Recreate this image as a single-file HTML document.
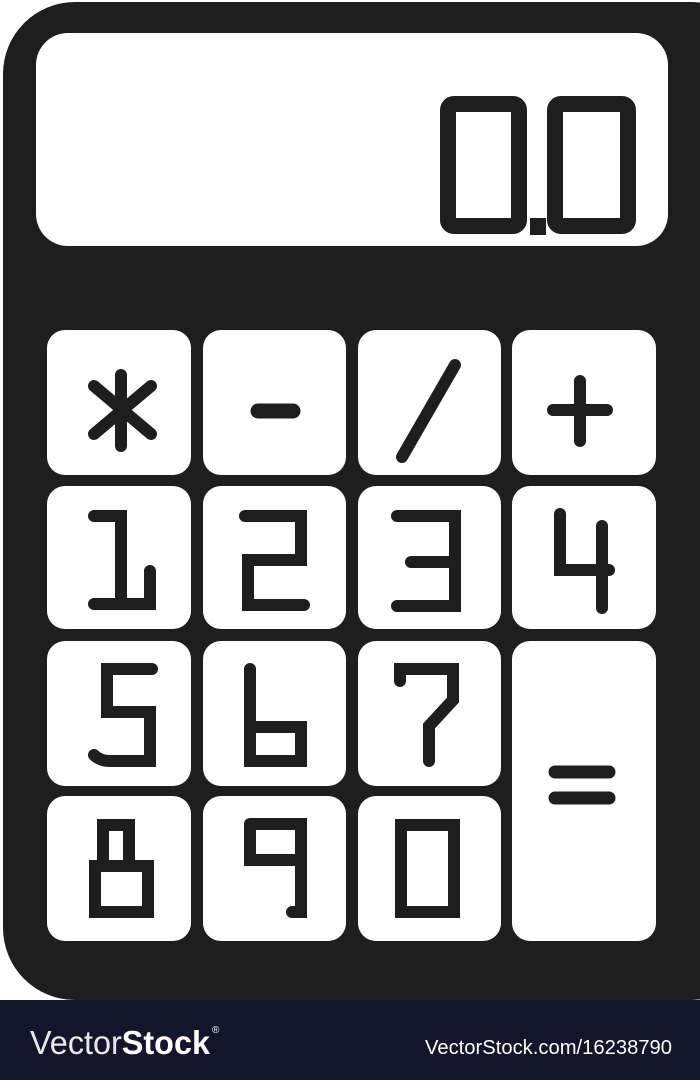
<!DOCTYPE html>
<html><head><meta charset="utf-8"><style>
html,body{margin:0;padding:0;width:700px;height:1080px;overflow:hidden;background:#fff;}
svg{display:block}
</style></head><body>
<svg width="700" height="1080" viewBox="0 0 700 1080" xmlns="http://www.w3.org/2000/svg">
<rect x="0" y="0" width="700" height="1000" fill="#fff"/>
<rect x="3" y="2" width="760" height="998" rx="72" fill="#1e1e1e"/>
<rect x="36" y="33" width="632" height="213" rx="32" fill="#fff"/>
<g fill="none" stroke="#1e1e1e" stroke-width="16" stroke-linejoin="round">
<rect x="448" y="104" width="71" height="122" rx="6"/>
<rect x="555" y="104" width="73" height="122" rx="6"/>
</g>
<rect x="530" y="218" width="16" height="17" fill="#1e1e1e"/>
<g fill="#fff">
<rect x="47" y="330" width="144" height="145" rx="18"/>
<rect x="203" y="330" width="143" height="145" rx="18"/>
<rect x="358" y="330" width="143" height="145" rx="18"/>
<rect x="512" y="330" width="144" height="145" rx="18"/>
<rect x="47" y="486" width="144" height="143" rx="18"/>
<rect x="203" y="486" width="143" height="143" rx="18"/>
<rect x="358" y="486" width="143" height="143" rx="18"/>
<rect x="512" y="486" width="144" height="143" rx="18"/>
<rect x="47" y="641" width="144" height="145" rx="18"/>
<rect x="203" y="641" width="143" height="145" rx="18"/>
<rect x="358" y="641" width="143" height="145" rx="18"/>
<rect x="512" y="641" width="144" height="300" rx="18"/>
<rect x="47" y="796" width="144" height="145" rx="18"/>
<rect x="203" y="796" width="143" height="145" rx="18"/>
<rect x="358" y="796" width="143" height="145" rx="18"/>
</g>
<g fill="none" stroke="#1e1e1e" stroke-width="12" stroke-linecap="round" stroke-linejoin="miter">
<path d="M121 375V446M94 386L151 434M94 434L151 386"/>
<path d="M258 411H293" stroke-width="15"/>
<path d="M455 365L402 457"/>
<path d="M553 410H607M580 381V441"/>
<path d="M94 516H121V604M94 604H150V571"/>
<path d="M245 516H301V560H248V605H304" stroke-linecap="butt"/>
<path d="M245 516H301M248 605H304"/>
<path d="M397 516H455V606H397M411 562H455"/>
<path d="M560 514V570H609M602 526V608"/>
<path d="M152 669H107V712H150V761H110Q100 761 94 755"/>
<path d="M250 669V761H301V727H250"/>
<path d="M400 681V669H453V700L429 726V761"/>
<path d="M555 772H609M555 798H609" stroke-width="13"/>
<path d="M103 825H129V866H103ZM95 866H148V912H95Z" stroke-linecap="butt"/>
<path d="M250 824H301V912H292M250 824V860H301" />
<path d="M401 825H454V912H401Z" stroke-linecap="butt"/>
</g>
<rect x="0" y="1000" width="700" height="80" fill="#13152a"/>
<text x="30" y="1054" font-family="Liberation Sans, sans-serif" font-size="33" fill="#fff" textLength="180" lengthAdjust="spacingAndGlyphs"><tspan font-weight="normal" fill="#e8e8ee">Vector</tspan><tspan font-weight="bold">Stock</tspan></text>
<text x="212" y="1033" font-family="Liberation Sans, sans-serif" font-size="10" fill="#fff">®</text>
<text x="425" y="1054" font-family="Liberation Sans, sans-serif" font-size="20" fill="#fff" textLength="247" lengthAdjust="spacingAndGlyphs">VectorStock.com/16238790</text>
</svg>
</body></html>
